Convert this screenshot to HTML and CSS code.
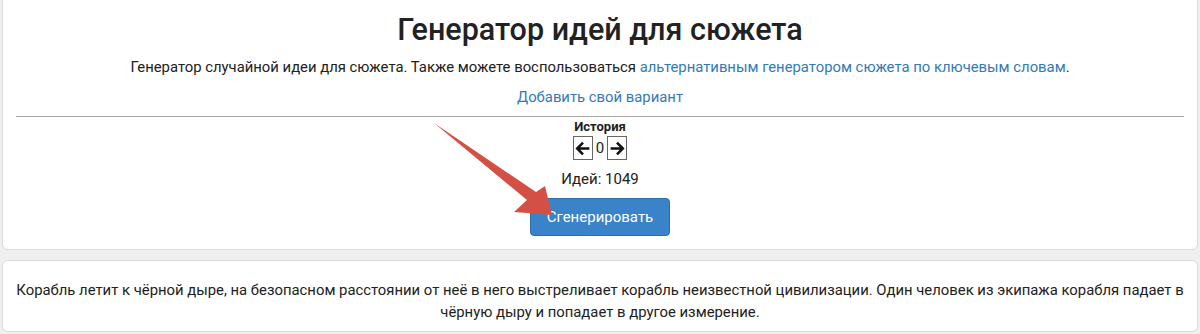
FILE: index.html
```html
<!DOCTYPE html>
<html lang="ru">
<head>
<meta charset="utf-8">
<link rel="stylesheet" href="styles.css">
</head>
<body>
<div class="page">
  <section class="card main">
    <h1 class="title">Генератор идей для сюжета</h1>
    <p class="desc">Генератор случайной идеи для сюжета. Также можете воспользоваться <a href="#">альтернативным генератором сюжета по ключевым словам</a>.</p>
    <p class="add"><a href="#">Добавить свой вариант</a></p>
    <hr class="sep">
    <div class="history">
      <div class="history-title">История</div>
      <div class="history-nav">
        <span class="navbtn">
          <svg width="17" height="17" viewBox="0 0 16 16"><path d="M14.5 8H3M8.5 2.5L3 8l5.5 5.5" fill="none" stroke="#111" stroke-width="2.4"/></svg>
        </span>
        <span class="num">0</span>
        <span class="navbtn">
          <svg width="17" height="17" viewBox="0 0 16 16"><path d="M1.5 8H13M7.5 2.5L13 8l-5.5 5.5" fill="none" stroke="#111" stroke-width="2.4"/></svg>
        </span>
      </div>
    </div>
    <div class="count">Идей: 1049</div>
    <button class="gen">Сгенерировать</button>
    <svg class="arrow" width="125" height="100" viewBox="0 0 125 100">
      <polygon points="2,2 95,79 82,91 120,94 113,65 104,71" fill="#d55044"/>
    </svg>
  </section>
  <section class="card result">
    <p class="idea">Корабль летит к чёрной дыре, на безопасном расстоянии от неё в него выстреливает корабль неизвестной цивилизации. Один человек из экипажа корабля падает в<br>чёрную дыру и попадает в другое измерение.</p>
  </section>
</div>
</body>
</html>
```
FILE: styles.css
```css
html, body {
  margin: 0;
  padding: 0;
  background: #efefef;
  font-family: Roboto, "Noto Sans", sans-serif;
  color: #212121;
}
.page {
  padding: 0 2px;
  display: flex;
  flex-direction: column;
  gap: 10px;
}
.card {
  background: #fff;
  border: 1px solid #dcdcdc;
  border-radius: 6px;
}
.main {
  position: relative;
  margin-top: -6px;
  padding: 16px 13px 13px;
  display: flex;
  flex-direction: column;
  align-items: center;
}
.title {
  margin: 0;
  font-size: 30.5px;
  font-weight: 500;
  line-height: 38px;
  color: #222;
}
.desc {
  margin: 7px 0 0;
  font-size: 14.85px;
  line-height: 22px;
  text-align: center;
}
a {
  color: #337ab7;
  text-decoration: none;
}
.add {
  margin: 8px 0 0;
  font-size: 14.85px;
  line-height: 22px;
}
.sep {
  align-self: stretch;
  margin: 8px 0 0;
  border: 0;
  border-top: 1px solid #a8a8a8;
}
.history {
  margin-top: 2px;
  display: flex;
  flex-direction: column;
  align-items: center;
}
.history-title {
  font-size: 13px;
  font-weight: 700;
  line-height: 16px;
}
.history-nav {
  display: flex;
  align-items: center;
  gap: 2px;
  margin-top: 1px;
}
.navbtn {
  box-sizing: border-box;
  width: 20px;
  height: 24px;
  border: 1px solid #666;
  display: flex;
  align-items: center;
  justify-content: center;
  background: #fff;
}
.num {
  font-size: 15px;
  padding: 0 1px;
}
.count {
  margin-top: 8px;
  font-size: 15px;
  line-height: 22px;
}
.gen {
  margin-top: 8px;
  width: 140px;
  height: 38px;
  background: #3a83c9;
  color: #fff;
  border: 1px solid #2f6fae;
  border-radius: 4px;
  font-family: Roboto, "Noto Sans", sans-serif;
  font-size: 15px;
}
.arrow {
  position: absolute;
  left: 429px;
  top: 126px;
}
.result {
  padding: 18px 8px 8px;
}
.idea {
  margin: 0;
  text-align: center;
  font-size: 14.85px;
  line-height: 22px;
}
```
